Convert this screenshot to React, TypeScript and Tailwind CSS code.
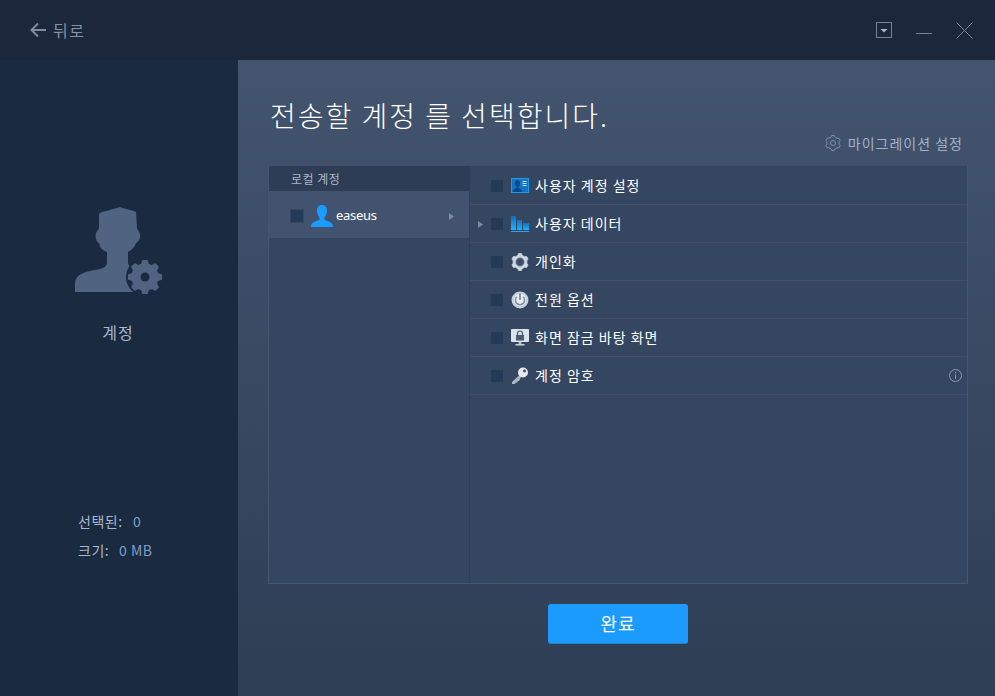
const font = { fontFamily: '"Noto Sans CJK KR", "Liberation Sans", sans-serif' };

function gearPath(cx: number, cy: number, ro: number, ri: number, n: number) {
  const pts: string[] = [];
  const step = (Math.PI * 2) / n;
  for (let i = 0; i < n; i++) {
    const a = i * step - Math.PI / 2;
    const corners: [number, number][] = [
      [a - step * 0.32, ri],
      [a - step * 0.16, ro],
      [a + step * 0.16, ro],
      [a + step * 0.32, ri],
    ];
    for (const [t, r] of corners) {
      pts.push(`${(cx + r * Math.cos(t)).toFixed(2)} ${(cy + r * Math.sin(t)).toFixed(2)}`);
    }
  }
  return "M" + pts.join(" L") + "Z";
}

function Box() {
  return <span className="block w-[14px] h-[14px] shrink-0 bg-[#253a57] border border-[#33475f]" />;
}

function Caret({ className }: { className: string }) {
  return (
    <svg width="5" height="7" viewBox="0 0 5 7" className={className}>
      <path d="M0 0 L5 3.5 L0 7Z" fill="#7d8ba1" />
    </svg>
  );
}

function CardIcon() {
  return (
    <svg width="18" height="15" viewBox="0 0 18 15">
      <rect width="18" height="15" fill="#1c9bf0" />
      <rect x="1" y="1" width="16" height="13" fill="#1573c4" />
      <path d="M2 14 C2 11 4 10.5 5.5 10 L5.5 8.5 C4.5 8 4 6.5 4 5 C4 3 5 2.2 6.5 2.2 C8 2.2 9 3 9 5 C9 6.5 8.5 8 7.5 8.5 L7.5 10 C9 10.5 11 11 11 14Z" fill="#0b4a8a" />
      <path d="M11.5 3.5h4M11.5 5.5h4M11.5 7.5h4" stroke="#bfe3fb" strokeWidth="1" />
    </svg>
  );
}

function BarsIcon() {
  return (
    <svg width="18" height="16" viewBox="0 0 18 16">
      <defs>
        <linearGradient id="bars" x1="0" y1="0" x2="0" y2="1">
          <stop offset="0" stopColor="#0f6fc4" />
          <stop offset="1" stopColor="#22b2f5" />
        </linearGradient>
      </defs>
      <rect x="0" y="0" width="5" height="14" fill="url(#bars)" />
      <rect x="6" y="4" width="5" height="10" fill="url(#bars)" />
      <rect x="12" y="7" width="6" height="7" fill="url(#bars)" />
      <rect x="0" y="15" width="18" height="1" fill="#2aa8ee" />
    </svg>
  );
}

function GearIcon() {
  return (
    <svg width="18" height="18" viewBox="0 0 18 18">
      <path d={gearPath(9, 9, 8.6, 7, 6)} fill="#d0d8e2" stroke="#d0d8e2" strokeWidth="0.8" strokeLinejoin="round" />
      <circle cx="9" cy="9" r="4.2" fill="#3d4d66" stroke="#8b99ad" strokeWidth="0.8" />
    </svg>
  );
}

function PowerIcon() {
  return (
    <svg width="18" height="18" viewBox="0 0 18 18">
      <circle cx="9" cy="9" r="8.5" fill="#c3cedb" />
      <circle cx="9" cy="9" r="6.5" fill="#e9eef3" />
      <path d="M5.8 5.8 A4.6 4.6 0 1 0 12.2 5.8" fill="none" stroke="#7e8ea4" strokeWidth="1.6" />
      <path d="M9 2.5 V9" stroke="#7e8ea4" strokeWidth="1.8" />
    </svg>
  );
}

function LockIcon() {
  return (
    <svg width="18" height="17" viewBox="0 0 18 17">
      <rect x="0" y="0" width="18" height="13" rx="1" fill="#dbe3ea" />
      <path d="M6.5 6 V4.5 A2.5 2.5 0 0 1 11.5 4.5 V6" fill="none" stroke="#4a5a70" strokeWidth="1.2" />
      <rect x="5" y="6" width="8" height="5.5" fill="#4a5a70" />
      <rect x="7.5" y="13" width="3" height="2" fill="#aeb9c6" />
      <rect x="4.5" y="15" width="9" height="1.5" fill="#c8d1db" />
    </svg>
  );
}

function KeyIcon() {
  return (
    <svg width="18" height="18" viewBox="0 0 18 18">
      <path d="M9 7.5 L1 15 L1 17 L4 17 L5 15.5 L6.5 15.5 L6.5 14 L8 14 L10.5 9Z" fill="#aab6c5" />
      <circle cx="12" cy="5.5" r="5" fill="#e4e9ef" />
      <circle cx="13.5" cy="4" r="1.4" fill="#35465f" />
    </svg>
  );
}

const rows = [
  { label: "사용자 계정 설정", icon: <CardIcon /> },
  { label: "사용자 데이터", icon: <BarsIcon />, caret: true },
  { label: "개인화", icon: <GearIcon /> },
  { label: "전원 옵션", icon: <PowerIcon /> },
  { label: "화면 잠금 바탕 화면", icon: <LockIcon /> },
  { label: "계정 암호", icon: <KeyIcon />, info: true },
];

export default function App() {
  return (
    <div style={font} className="w-[995px] h-[696px] flex flex-col overflow-hidden bg-[#1a2a40]">
      <header className="h-[60px] shrink-0 bg-[#1b283b] flex items-center justify-between pl-[30px] pr-[22px]">
        <div className="flex items-center gap-[7px] text-[#8592a5]">
          <svg width="16" height="16" viewBox="0 0 16 16">
            <path d="M8 1.5 L1.5 8 L8 14.5 M2 8 H16" fill="none" stroke="#7e8ba0" strokeWidth="2" />
          </svg>
          <span className="text-[16px] leading-5 tracking-[1.5px]">뒤로</span>
        </div>
        <div className="flex items-center gap-[24px]">
          <svg width="16" height="16" viewBox="0 0 16 16">
            <rect x="0.5" y="0.5" width="15" height="15" fill="none" stroke="#74839a" />
            <path d="M4.5 7 H11.5 L8 10.5Z" fill="#a9b4c3" />
          </svg>
          <svg width="16" height="16" viewBox="0 0 16 16">
            <path d="M0 11.5 H16" stroke="#74839a" />
          </svg>
          <svg width="17" height="17" viewBox="0 0 17 17">
            <path d="M0.5 0.5 L16.5 16.5 M16.5 0.5 L0.5 16.5" stroke="#74839a" />
          </svg>
        </div>
      </header>
      <div className="flex-1 flex min-h-0">
        <aside className="w-[238px] shrink-0 bg-[#1a2a40] flex flex-col pt-[145px] pl-[75px]">
          <svg width="88" height="90" viewBox="0 0 88 90" className="block">
            <path
              d="M0 87 L0 79 C0 71 6 68 15 66 C24 64 31 64 32 58 L32 47 C27 45 25 43 24 38 C21 37 20 31 21 28 L24 23 L24 9 C26 6 34 6 45 2 C50 4 54 4 61 7 L62 23 L65 29 C66 32 64 37 61 38 C60 42 57 45 53 47 L53 58 C54 63 60 65 66 66 L66 87Z"
              fill="#506380"
            />
            <circle cx="70" cy="72" r="19" fill="#1a2a40" />
            <path d={gearPath(70, 72, 16.5, 13, 8)} fill="#506380" stroke="#506380" strokeWidth="1.5" strokeLinejoin="round" />
            <circle cx="70" cy="72" r="4.5" fill="#1a2a40" />
          </svg>
          <div className="w-[86px] text-center text-[16px] leading-5 text-[#a9b8cd] mt-[27px] tracking-[1px]">계정</div>
          <div className="mt-[169px] ml-[3px] text-[14px] leading-5 text-[#a9b8cd] flex flex-col gap-[9px] tracking-[0.5px]">
            <div className="flex">
              <span className="w-[55px]">선택된:</span>
              <span className="text-[#7ea0c8]">0</span>
            </div>
            <div className="flex">
              <span className="w-[41px]">크기:</span>
              <span className="text-[#7ea0c8]">0 MB</span>
            </div>
          </div>
        </aside>
        <main className="flex-1 bg-gradient-to-b from-[#43546f] to-[#2e3e55] pl-[30px] pr-[27px] flex flex-col">
          <h1 className="mt-[37px] ml-[2px] text-[28px] leading-9 text-white font-light tracking-[2px] whitespace-nowrap">전송할 계정 를 선택합니다.</h1>
          <div className="mt-[-3px] mb-[10px] h-[26px] flex items-center justify-end gap-[7px] pr-[5px] text-[14px] leading-5 text-[#a3b2c8] tracking-[1px]">
            <svg width="16" height="16" viewBox="0 0 16 16">
              <path d={gearPath(8, 8, 7.6, 6.2, 6)} fill="none" stroke="#7f90a8" strokeLinejoin="round" />
              <circle cx="8" cy="8" r="2.5" fill="none" stroke="#7f90a8" />
            </svg>
            <span>마이그레이션 설정</span>
          </div>
          <div className="h-[418px] flex bg-[#354661] border border-[#46566f] border-t-0">
            <div className="w-[201px] shrink-0 border-r border-[#2f3f57] flex flex-col">
              <div className="h-[25px] bg-[#2d3d55] pl-[22px] flex items-center text-[12px] text-[#a9b8cd] tracking-[0.5px]">로컬 계정</div>
              <div className="h-[48px] bg-[#42536f] border-b border-[#33445e] flex items-center pl-[21px] pr-[15px] pt-[3px]">
                <Box />
                <svg width="24" height="24" viewBox="0 0 24 24" className="ml-[6px]">
                  <path d="M1 23 C1 19 4 17.5 8 16.5 C9.5 16 10 15 9.5 13.5 C7.5 11 7 8.5 7 6.5 C7 3 9 1 12 1 C15 1 17 3 17 6.5 C17 8.5 16.5 11 14.5 13.5 C14 15 14.5 16 16 16.5 C20 17.5 23 19 23 23Z" fill="#1a9bff" />
                </svg>
                <span className="ml-[2px] flex-1 text-[13px] text-white tracking-[-0.3px]" style={{ fontFamily: '"Noto Sans", sans-serif' }}>easeus</span>
                <Caret className="shrink-0" />
              </div>
            </div>
            <div className="flex-1 flex flex-col">
              {rows.map((r) => (
                <div key={r.label} className="relative h-[38px] shrink-0 flex items-center pl-[20px] pr-[5px] border-b border-[#414f68] first:h-[39px] first:pt-[1px]">
                  {r.caret && <Caret className="absolute left-[8px] top-[16px]" />}
                  <Box />
                  <span className="w-[18px] ml-[7px] flex items-center justify-center shrink-0">{r.icon}</span>
                  <span className="ml-[6px] flex-1 text-[14px] text-white tracking-[1px]">{r.label}</span>
                  {r.info && (
                    <svg width="13" height="13" viewBox="0 0 13 13">
                      <circle cx="6.5" cy="6.5" r="6" fill="none" stroke="#8b99ad" />
                      <path d="M6.5 5.5 V10 M6.5 3 V4.2" stroke="#8b99ad" />
                    </svg>
                  )}
                </div>
              ))}
            </div>
          </div>
          <div className="mt-[20px] flex justify-center">
            <button className="w-[140px] h-[40px] rounded-[3px] bg-[#1c9bff] border-b border-[#2a7fc5] text-white text-[18px] tracking-[1px]">완료</button>
          </div>
        </main>
      </div>
    </div>
  );
}
